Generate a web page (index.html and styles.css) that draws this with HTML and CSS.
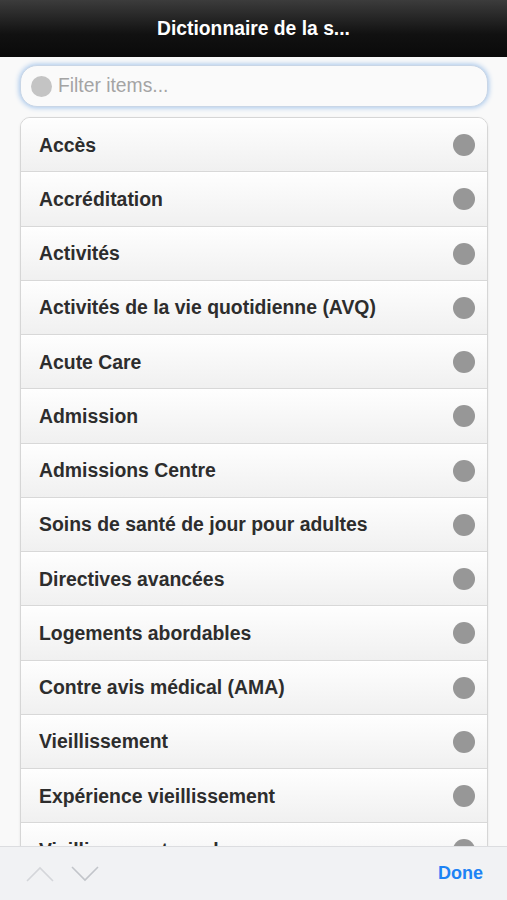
FILE: index.html
```html
<!DOCTYPE html>
<html lang="fr">
  <head>
    <meta charset="utf-8" />
    <meta name="viewport" content="width=device-width" />
    <title>Dictionnaire de la santé</title>
    <link rel="stylesheet" href="styles.css">
  </head>

  <body>
    <header class="page-header">
      <h1>Dictionnaire de la s...</h1>
    </header>

    <main class="page-body">
      <div class="filter">
        <span class="filter-icon"></span>
        <input type="text" placeholder="Filter items..." />
      </div>

      <ul class="listview">
        <li><a href="#">Accès</a></li>
        <li><a href="#">Accréditation</a></li>
        <li><a href="#">Activités</a></li>
        <li><a href="#">Activités de la vie quotidienne (AVQ)</a></li>
        <li><a href="#">Acute Care</a></li>
        <li><a href="#">Admission</a></li>
        <li><a href="#">Admissions Centre</a></li>
        <li><a href="#">Soins de santé de jour pour adultes</a></li>
        <li><a href="#">Directives avancées</a></li>
        <li><a href="#">Logements abordables</a></li>
        <li><a href="#">Contre avis médical (AMA)</a></li>
        <li><a href="#">Vieillissement</a></li>
        <li><a href="#">Expérience vieillissement</a></li>
        <li><a href="#">Vieillissement en place</a></li>
      </ul>
    </main>

    <footer class="toolbar">
      <div class="arrows">
        <svg width="28" height="16" viewBox="0 0 28 16"><path d="M1 15 L14 2 L27 15" fill="none" stroke="#d4d6da" stroke-width="1.6"/></svg>
        <svg width="28" height="16" viewBox="0 0 28 16"><path d="M1 1 L14 14 L27 1" fill="none" stroke="#c2c5ca" stroke-width="1.6"/></svg>
      </div>
      <a class="done" href="#">Done</a>
    </footer>
  </body>
</html>
```

FILE: styles.css
```css
html {
  box-sizing: border-box;
}

* {
  box-sizing: inherit;
}

body {
  margin: 0;
  padding: 0;
  background-color: #f9f9f9;
  font-family: "Liberation Sans", Arial, Helvetica, sans-serif;
  color: #333;
  overflow: hidden;
  height: 900px;
}

.page-header {
  height: 57px;
  background: linear-gradient(#3c3c3c, #111 60%, #0a0a0a);
  display: flex;
  align-items: center;
  justify-content: center;
}

.page-header h1 {
  margin: 0;
  color: #fff;
  font-size: 19.3px;
  font-weight: bold;
}

.page-body {
  padding: 8px 19px 0 20px;
}

.filter {
  height: 42px;
  border-radius: 17px;
  background: #fafafa;
  border: 1px solid #c9d6e6;
  box-shadow: 0 0 5px 1px #a9c8ec;
  display: flex;
  align-items: center;
  padding: 0 10px;
  gap: 6px;
}

.filter-icon {
  width: 21px;
  height: 21px;
  border-radius: 50%;
  background: #c4c4c4;
  flex: none;
}

.filter input {
  border: 0;
  background: transparent;
  font: 19.3px "Liberation Sans", Arial, sans-serif;
  color: #333;
  outline: none;
  width: 100%;
  padding: 0;
}

.filter input::placeholder {
  color: #a4a4a4;
}

.listview {
  list-style-type: none;
  margin: 10px 0 0;
  padding: 0;
  border: 1px solid #d6d6d6;
  border-radius: 10px 10px 0 0;
  overflow: hidden;
  box-shadow: 0 1px 3px rgba(0, 0, 0, 0.08);
}

.listview li {
  border-bottom: 1px solid #d8d8d8;
  border-top: 1px solid #fff;
  background: linear-gradient(#fefefe, #f0f0f0);
}

.listview li a {
  display: flex;
  align-items: center;
  justify-content: space-between;
  height: 52.25px;
  padding: 0 12px 0 18px;
  color: #2d2d2d;
  font-size: 19.4px;
  font-weight: bold;
  text-decoration: none;
}

.listview li a::after {
  content: "";
  width: 22px;
  height: 22px;
  border-radius: 50%;
  background: #979797;
}

.toolbar {
  position: fixed;
  left: 0;
  right: 0;
  bottom: 0;
  height: 54px;
  background: #f1f2f4;
  border-top: 1px solid #dcdde0;
  display: flex;
  align-items: center;
  justify-content: space-between;
  padding: 0 24px 0 26px;
}

.arrows {
  display: flex;
  gap: 17px;
}

.done {
  color: #1d83f5;
  font-size: 18px;
  font-weight: bold;
  text-decoration: none;
}
```
